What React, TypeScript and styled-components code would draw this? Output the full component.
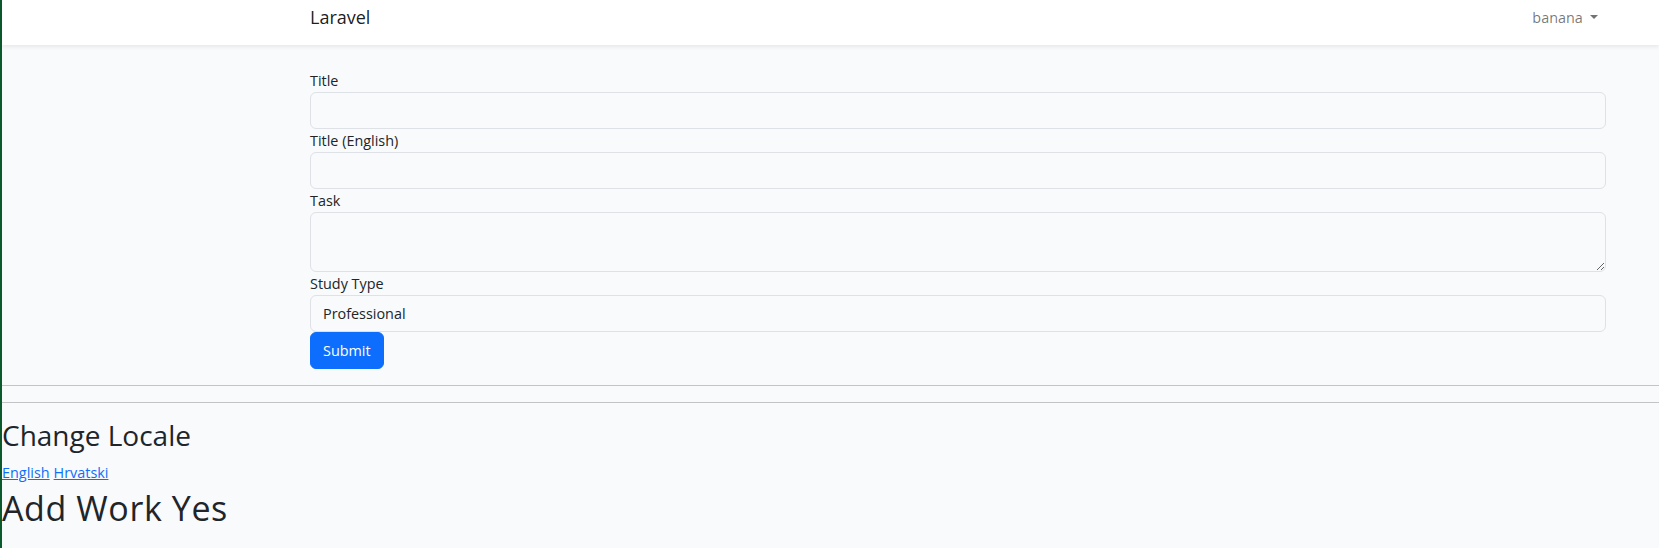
import React from "react";
import styled, { createGlobalStyle } from "styled-components";

const FONT = `"Open Sans", Lato, sans-serif`;

const GlobalStyle = createGlobalStyle`
  html, body {
    margin: 0;
    padding: 0;
  }
  body {
    background: #f8fafc;
    color: #212529;
    font-family: ${FONT};
    font-size: 14.4px;
    line-height: 1.6;
  }
  *, *::before, *::after { box-sizing: border-box; }
`;

const Page = styled.div`
  min-height: 548px;
  border-left: 2px solid #0b5a2c;
  background: #f8fafc;
`;

const Navbar = styled.nav`
  height: 45px;
  background: #fff;
  box-shadow: 0 0.125rem 0.25rem rgba(0, 0, 0, 0.075);
`;

const Container = styled.div`
  width: 1296px;
  margin-left: 308px;
`;

const NavInner = styled(Container)`
  height: 100%;
  display: flex;
  align-items: center;
  justify-content: space-between;
  padding-bottom: 10px;
`;

const Brand = styled.a`
  font-size: 18px;
  color: rgba(0, 0, 0, 0.9);
  text-decoration: none;
  line-height: 1.6;
`;

const UserToggle = styled.a`
  font-size: 14.4px;
  color: rgba(0, 0, 0, 0.55);
  text-decoration: none;
  padding: 0 8px;
  display: inline-flex;
  align-items: center;
  &::after {
    content: "";
    display: inline-block;
    margin-left: 0.5em;
    border-top: 0.3em solid;
    border-right: 0.3em solid transparent;
    border-left: 0.3em solid transparent;
    border-bottom: 0;
    vertical-align: 0.255em;
  }
`;

const Main = styled.main`
  padding-top: 24px;
`;

const Form = styled.form`
  display: flex;
  flex-direction: column;
  align-items: stretch;
`;

const Label = styled.label`
  display: block;
  line-height: 23.04px;
  height: 23.04px;
`;

const fieldStyles = `
  display: block;
  width: 100%;
  padding: 6px 12px;
  font-family: ${FONT};
  font-size: 14.4px;
  line-height: 1.6;
  color: #212529;
  background: #f8fafc;
  border: 1px solid #dee2e6;
  border-radius: 6px;
  appearance: none;
  outline: none;
`;

const Input = styled.input`
  ${fieldStyles}
  height: 37.04px;
`;

const TextArea = styled.textarea`
  ${fieldStyles}
  height: 60.08px;
  resize: vertical;
`;

const Select = styled.select`
  ${fieldStyles}
  height: 37.04px;
`;

const SubmitButton = styled.button`
  align-self: flex-start;
  height: 37.04px;
  padding: 6px 12px;
  font-family: ${FONT};
  font-size: 14.4px;
  line-height: 1.6;
  color: #fff;
  background: #0d6efd;
  border: 1px solid #0d6efd;
  border-radius: 6px;
`;

const Rule = styled.hr`
  margin: 16px 0;
  border: 0;
  border-top: 1px solid #212529;
  opacity: 0.25;
`;

const LocaleHeading = styled.h3`
  margin: 0 0 8px;
  font-size: 28px;
  font-weight: 400;
  line-height: 1.2;
`;

const LocaleLinks = styled.div`
  display: flex;
  gap: 4px;
  margin-bottom: 5px;
  line-height: 23.04px;
`;

const LocaleLink = styled.a`
  color: #0d6efd;
  text-decoration: underline;
`;

const WorkHeading = styled.h2`
  margin: 0;
  font-size: 34px;
  letter-spacing: 0.6px;
  font-weight: 400;
  line-height: 38.4px;
`;

export default function App() {
  return (
    <>
      <GlobalStyle />
      <Page>
        <Navbar>
          <NavInner>
            <Brand href="#">Laravel</Brand>
            <UserToggle href="#">banana</UserToggle>
          </NavInner>
        </Navbar>
        <Main>
          <Container>
            <Form onSubmit={(e) => e.preventDefault()}>
              <Label htmlFor="title">Title</Label>
              <Input id="title" type="text" />
              <Label htmlFor="title_en">Title (English)</Label>
              <Input id="title_en" type="text" />
              <Label htmlFor="task">Task</Label>
              <TextArea id="task" rows={2} />
              <Label htmlFor="study">Study Type</Label>
              <Select id="study" defaultValue="professional">
                <option value="professional">Professional</option>
                <option value="undergraduate">Undergraduate</option>
              </Select>
              <SubmitButton type="submit">Submit</SubmitButton>
            </Form>
          </Container>
        </Main>
        <Rule />
        <Rule />
        <LocaleHeading>Change Locale</LocaleHeading>
        <LocaleLinks>
          <LocaleLink href="#">English</LocaleLink>
          <LocaleLink href="#">Hrvatski</LocaleLink>
        </LocaleLinks>
        <WorkHeading>Add Work Yes</WorkHeading>
      </Page>
    </>
  );
}
